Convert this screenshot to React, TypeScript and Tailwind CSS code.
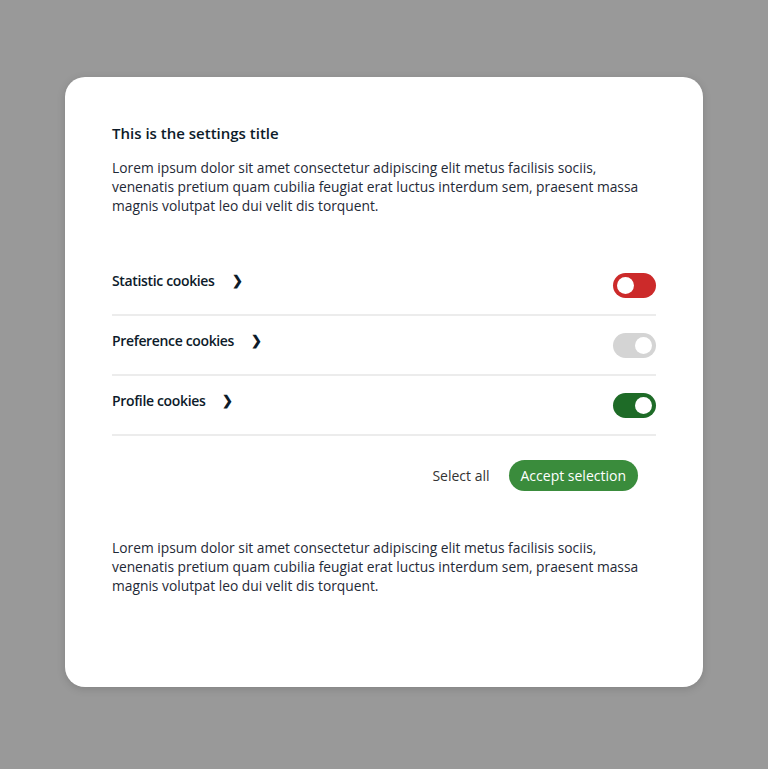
import React from "react";

interface ToggleProps {
	state: "off" | "disabled" | "on";
}

const Toggle = ({ state }: ToggleProps) => {
	const track =
		state === "off"
			? "bg-[#cc2a2a] justify-start"
			: state === "disabled"
			? "bg-[#d4d4d4] justify-end"
			: "bg-[#1e6b27] justify-end";
	return (
		<div className={`flex items-center w-[43px] h-[25px] rounded-full px-[4px] ${track}`}>
			<div className="w-[17px] h-[17px] rounded-full bg-white" />
		</div>
	);
};

const rows: { label: string; state: ToggleProps["state"] }[] = [
	{ label: "Statistic cookies", state: "off" },
	{ label: "Preference cookies", state: "disabled" },
	{ label: "Profile cookies", state: "on" },
];

const lorem =
	"Lorem ipsum dolor sit amet consectetur adipiscing elit metus facilisis sociis, venenatis pretium quam cubilia feugiat erat luctus interdum sem, praesent massa magnis volutpat leo dui velit dis torquent.";

export default function App() {
	return (
		<div
			className="w-full min-h-[769px] bg-[#999999] flex items-start justify-center pt-[77px]"
			style={{ fontFamily: '"Open Sans", sans-serif' }}
		>
			<div className="w-[638px] h-[610px] bg-white rounded-[20px] shadow-[0_2px_8px_rgba(0,0,0,0.15)] px-[47px] pt-[22px]">
				<h2 className="text-[15px] font-semibold text-[#0d1b2a] leading-[22px] mt-[23px]">
					This is the settings title
				</h2>
				<p className="text-[13.8px] leading-[19px] text-[#1f2a37] mt-[14px]">
					{lorem}
				</p>
				<div className="mt-[41px]">
					{rows.map((r) => (
						<div
							key={r.label}
							className="flex items-center justify-between h-[60px] border-b-2 border-[#ececec]"
						>
							<div className="flex items-center gap-[17px] -mt-[9px] text-[14px] font-semibold tracking-[-0.35px] text-[#0d1b2a]">
								<span>{r.label}</span>
								<span className="text-[13px] font-bold">❯</span>
							</div>
							<Toggle state={r.state} />
						</div>
					))}
				</div>
				<div className="flex items-center justify-end gap-[19px] mt-[24px] pr-[18px]">
					<button className="text-[14px] text-[#333333]">Select all</button>
					<button className="h-[31px] px-[12px] rounded-full bg-[#3a8c3c] text-white text-[14px] font-medium">
						Accept selection
					</button>
				</div>
				<p className="text-[13.8px] leading-[19px] text-[#1f2a37] mt-[47px]">
					{lorem}
				</p>
			</div>
		</div>
	);
}
